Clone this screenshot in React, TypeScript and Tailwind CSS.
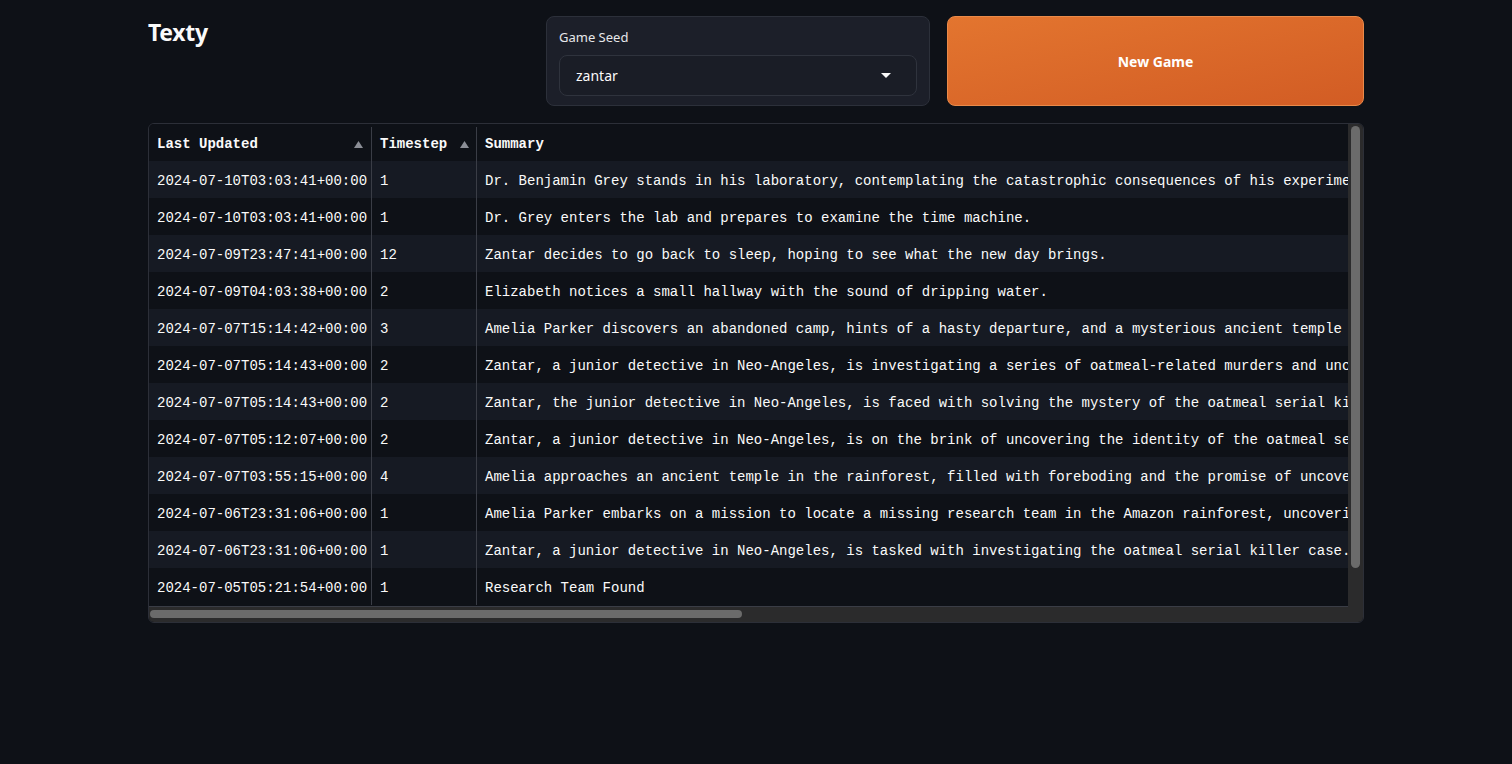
import React from "react";

// data: rows shown in the history table //
const rows = [
  { updated: "2024-07-10T03:03:41+00:00", step: "1", summary: "Dr. Benjamin Grey stands in his laboratory, contemplating the catastrophic consequences of his experiment with the time machine." },
  { updated: "2024-07-10T03:03:41+00:00", step: "1", summary: "Dr. Grey enters the lab and prepares to examine the time machine." },
  { updated: "2024-07-09T23:47:41+00:00", step: "12", summary: "Zantar decides to go back to sleep, hoping to see what the new day brings." },
  { updated: "2024-07-09T04:03:38+00:00", step: "2", summary: "Elizabeth notices a small hallway with the sound of dripping water." },
  { updated: "2024-07-07T15:14:42+00:00", step: "3", summary: "Amelia Parker discovers an abandoned camp, hints of a hasty departure, and a mysterious ancient temple in the distance." },
  { updated: "2024-07-07T05:14:43+00:00", step: "2", summary: "Zantar, a junior detective in Neo-Angeles, is investigating a series of oatmeal-related murders and uncovers a new clue." },
  { updated: "2024-07-07T05:14:43+00:00", step: "2", summary: "Zantar, the junior detective in Neo-Angeles, is faced with solving the mystery of the oatmeal serial killer." },
  { updated: "2024-07-07T05:12:07+00:00", step: "2", summary: "Zantar, a junior detective in Neo-Angeles, is on the brink of uncovering the identity of the oatmeal serial killer." },
  { updated: "2024-07-07T03:55:15+00:00", step: "4", summary: "Amelia approaches an ancient temple in the rainforest, filled with foreboding and the promise of uncovering secrets." },
  { updated: "2024-07-06T23:31:06+00:00", step: "1", summary: "Amelia Parker embarks on a mission to locate a missing research team in the Amazon rainforest, uncovering strange signs." },
  { updated: "2024-07-06T23:31:06+00:00", step: "1", summary: "Zantar, a junior detective in Neo-Angeles, is tasked with investigating the oatmeal serial killer case." },
  { updated: "2024-07-05T05:21:54+00:00", step: "1", summary: "Research Team Found" },
];

const SortArrow = () => (
  <svg width="9" height="7" viewBox="0 0 9 7" className="shrink-0">
    <path d="M4.5 0 L9 7 L0 7 Z" fill="#8b8e96" />
  </svg>
);

// component: Texty 메인 화면 //
const App = () => {
  return (
    <div className="min-h-screen w-full bg-[#0e1117] text-[#fafafa] font-['Noto_Sans',sans-serif]">
      <div className="mx-auto w-[1216px] pt-4">
        {/* 상단: 제목 + 시드 선택 + 버튼 */}
        <div className="grid grid-cols-[381px_384px_417px] gap-[17px] h-[90px]">
          <h1 className="text-[23px] font-bold leading-[32px] tracking-[-0.3px]">Texty</h1>

          <div className="rounded-lg border border-[#2c303a] bg-[#1c1f29] px-3 pt-[10px]">
            <div className="text-[13px] leading-[20px] text-[#e6e7ea]">Game Seed</div>
            <div className="mt-[8px] flex h-[41px] items-center justify-between rounded-lg border border-[#2f333d] bg-[#1a1d26] pl-4 pr-[25px]">
              <span className="text-[14px] text-[#fafafa]">zantar</span>
              <svg width="10" height="5" viewBox="0 0 10 5">
                <path d="M0 0 L10 0 L5 5 Z" fill="#fafafa" />
              </svg>
            </div>
          </div>

          <button className="flex items-center justify-center rounded-lg border border-[#e98a4a] bg-gradient-to-br from-[#e3752f] to-[#d25c24] text-[14px] font-bold text-white">
            New Game
          </button>
        </div>

        {/* 테이블 */}
        <div className="relative mt-[17px] h-[500px] overflow-hidden rounded-md border border-[#2c2f38] font-['Liberation_Mono',monospace] text-[14px]">
          <div className="mr-[15px]">
            <div className="flex h-[37px] items-center bg-[#0e1117] pt-[3px] font-bold">
              <div className="flex h-full w-[223px] shrink-0 items-center justify-between border-r border-[#3a3d46] pl-2 pr-[8px]">
                <span>Last Updated</span>
                <SortArrow />
              </div>
              <div className="flex h-full w-[105px] shrink-0 items-center justify-between border-r border-[#3a3d46] pl-2 pr-[7px]">
                <span>Timestep</span>
                <SortArrow />
              </div>
              <div className="flex h-full flex-1 items-center pl-2">Summary</div>
            </div>
            {rows.map((row, i) => (
              <div
                key={i}
                className={`flex h-[37px] whitespace-nowrap ${i % 2 === 0 ? "bg-[#161a23]" : "bg-[#0e1117]"}`}
              >
                <div className="flex h-full w-[223px] shrink-0 items-center overflow-hidden border-r border-[#3a3d46] pl-2 pt-[3px]">{row.updated}</div>
                <div className="flex h-full w-[105px] shrink-0 items-center overflow-hidden border-r border-[#3a3d46] pl-2 pt-[3px]">{row.step}</div>
                <div className="flex h-full w-[871px] items-center overflow-hidden pl-2 pt-[3px]">{row.summary}</div>
              </div>
            ))}
          </div>

          {/* 스크롤바 */}
          <div className="absolute right-0 top-0 bottom-0 w-[15px] bg-[#2b2b2c]">
            <div className="absolute left-[3px] top-[2px] h-[442px] w-[9px] rounded-full bg-[#6b6b6b]" />
          </div>
          <div className="absolute bottom-0 left-0 right-[15px] h-[16px] border-t border-[#3a3d46] bg-[#2b2b2c]">
            <div className="absolute left-[1px] top-[3px] h-[8px] w-[592px] rounded-full bg-[#6b6b6b]" />
          </div>
        </div>
      </div>
    </div>
  );
};

export default App;
